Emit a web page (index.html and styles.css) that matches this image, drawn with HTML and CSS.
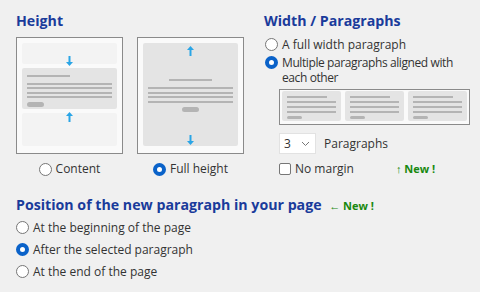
FILE: index.html
```html
<!DOCTYPE html>
<html lang="en">

<head>
    <meta charset="UTF-8">
    <title>Paragraph options</title>
    <link rel="stylesheet" href="styles.css">
</head>

<body>
    <div class="panel">
        <div class="top-row">
            <div class="height-col">
                <h3>Height</h3>
                <div class="height-options">
                    <label class="height-choice">
                        <div class="thumb">
                            <div class="block light top">
                                <svg class="arrow" width="7" height="10" viewBox="0 0 7 10"><path d="M3.5 10L7 6H4.5V0H2.5V6H0Z"/></svg>
                            </div>
                            <div class="block dark content-block">
                                <span class="line short"></span>
                                <span class="line"></span>
                                <span class="line"></span>
                                <span class="line"></span>
                                <span class="line"></span>
                                <span class="pill"></span>
                            </div>
                            <div class="block light bottom">
                                <svg class="arrow" width="7" height="10" viewBox="0 0 7 10"><path d="M3.5 0L7 4H4.5V10H2.5V4H0Z"/></svg>
                            </div>
                        </div>
                        <span class="radio-row"><span class="radio"></span>Content</span>
                    </label>
                    <label class="height-choice">
                        <div class="thumb">
                            <div class="block dark full">
                                <svg class="arrow" width="7" height="10" viewBox="0 0 7 10"><path d="M3.5 0L7 4H4.5V10H2.5V4H0Z"/></svg>
                                <div class="centered">
                                    <span class="line short"></span>
                                    <span class="line"></span>
                                    <span class="line"></span>
                                    <span class="line"></span>
                                    <span class="line"></span>
                                    <span class="pill"></span>
                                </div>
                                <svg class="arrow" width="7" height="10" viewBox="0 0 7 10"><path d="M3.5 10L7 6H4.5V0H2.5V6H0Z"/></svg>
                            </div>
                        </div>
                        <span class="radio-row"><span class="radio checked"></span>Full height</span>
                    </label>
                </div>
            </div>

            <div class="width-col">
                <h3>Width / Paragraphs</h3>
                <label class="option first"><span class="radio"></span>A full width paragraph</label>
                <label class="option multi"><span class="radio checked"></span><span>Multiple paragraphs aligned with each other</span></label>
                <div class="columns-thumb">
                    <div class="col-block">
                        <span class="line short"></span>
                        <span class="line"></span>
                        <span class="line"></span>
                        <span class="line"></span>
                        <span class="pill"></span>
                    </div>
                    <div class="col-block">
                        <span class="line short"></span>
                        <span class="line"></span>
                        <span class="line"></span>
                        <span class="line"></span>
                        <span class="pill"></span>
                    </div>
                    <div class="col-block">
                        <span class="line short"></span>
                        <span class="line"></span>
                        <span class="line"></span>
                        <span class="line"></span>
                        <span class="pill"></span>
                    </div>
                </div>
                <div class="count-row">
                    <div class="select">3
                        <svg width="9" height="6" viewBox="0 0 9 6"><path d="M1 1l3.5 3.5L8 1" fill="none" stroke="#777" stroke-width="1"/></svg>
                    </div>
                    <span>Paragraphs</span>
                </div>
                <div class="margin-row">
                    <label class="option"><span class="checkbox"></span>No margin</label>
                    <span class="new">&#8593; New !</span>
                </div>
            </div>
        </div>

        <h3 class="position-title">Position of the new paragraph in your page <span class="new">&#8592; New !</span></h3>
        <label class="option pos"><span class="radio"></span>At the beginning of the page</label>
        <label class="option pos"><span class="radio checked"></span>After the selected paragraph</label>
        <label class="option pos"><span class="radio"></span>At the end of the page</label>
    </div>
</body>

</html>
```

FILE: styles.css
```css
* {
    margin: 0;
    padding: 0;
    box-sizing: border-box;
}

body {
    font-family: 'Open Sans', 'Liberation Sans', sans-serif;
    background: #f0f0f0;
    color: #333;
    font-size: 12px;
}

.panel {
    padding: 11px 8px 0 16px;
}

h3 {
    font-size: 14.2px;
    font-weight: bold;
    color: #1a3b9b;
    line-height: 20px;
}

.top-row {
    display: flex;
}

.height-col {
    width: 248px;
}

.height-options {
    display: flex;
    gap: 14px;
    margin-top: 6px;
}

.height-choice {
    display: flex;
    flex-direction: column;
    align-items: center;
    width: 107px;
}

.thumb {
    width: 107px;
    height: 117px;
    border: 1px solid #8a8a8a;
    background: #fafafa;
    padding: 5px 5px 7px;
    display: flex;
    flex-direction: column;
    gap: 4px;
}

.block {
    border-radius: 2px;
    display: flex;
    flex-direction: column;
    align-items: center;
}

.light {
    background: #f3f3f3;
}

.light.top {
    height: 21px;
    justify-content: flex-end;
}

.light.top .arrow {
    margin-bottom: -2px;
}

.light.bottom {
    flex: 1;
}

.light.bottom .arrow {
    margin-top: -1px;
}

.dark {
    background: #e4e4e4;
}

.content-block {
    height: 41px;
    padding: 7px 5px 0;
    align-items: flex-start;
    gap: 2.4px;
}

.full {
    flex: 1;
    justify-content: space-between;
    padding: 3px 5px 1px;
}

.centered {
    display: flex;
    flex-direction: column;
    align-items: center;
    gap: 2.6px;
    width: 100%;
}

.line {
    display: block;
    height: 2px;
    width: 100%;
    background: #b4b4b4;
    flex-shrink: 0;
}

.line.short {
    width: 43px;
    margin-bottom: 3.5px;
}

.pill {
    display: block;
    width: 17px;
    height: 5px;
    border-radius: 3px;
    background: #b4b4b4;
    margin-top: 1.5px;
    flex-shrink: 0;
}

.arrow {
    fill: #2aa5e6;
    flex-shrink: 0;
}

.radio-row {
    display: flex;
    align-items: center;
    gap: 4px;
    margin-top: 8px;
    line-height: 14px;
}

.radio {
    width: 13px;
    height: 13px;
    border: 1px solid #767676;
    border-radius: 50%;
    background: #fff;
    flex-shrink: 0;
}

.radio.checked {
    border: 4px solid #0a62c9;
}

.checkbox {
    width: 12px;
    height: 12px;
    border: 1px solid #767676;
    border-radius: 2px;
    background: #fff;
    flex-shrink: 0;
}

.width-col {
    flex: 1;
}

.option {
    display: flex;
    align-items: center;
    gap: 4px;
    line-height: 15px;
}

.width-col .option {
    margin-left: 1px;
}

.option.first {
    margin-top: 6px;
}

.option.multi {
    align-items: flex-start;
    margin-top: 3px;
    letter-spacing: -0.4px;
}

.option.multi .radio {
    margin-top: 1px;
}

.columns-thumb {
    margin: 4px 2px 0 15px;
    height: 36px;
    border: 1px solid #8a8a8a;
    background: #fafafa;
    padding: 1px 2px 3px;
    display: flex;
    gap: 4px;
}

.col-block {
    flex: 1;
    background: #e4e4e4;
    border-radius: 2px;
    padding: 5px 5px 0;
    display: flex;
    flex-direction: column;
    gap: 3px;
}

.col-block .line.short {
    width: 40px;
    margin-bottom: 0;
}

.col-block .pill {
    width: 15px;
    height: 3px;
    margin-top: 0;
}

.count-row {
    display: flex;
    align-items: center;
    gap: 8px;
    margin: 8px 0 0 15px;
}

.select {
    width: 37px;
    height: 21px;
    background: #fff;
    border: 1px solid #e2e2e2;
    display: flex;
    align-items: center;
    justify-content: space-between;
    padding: 0 5px 0 4px;
}

.margin-row {
    display: flex;
    align-items: center;
    margin-left: 14px;
    margin-top: 7px;
}

.margin-row .option {
    width: 117px;
}

.new {
    color: #18880f;
    font-size: 11px;
    font-weight: bold;
}

.position-title {
    margin-top: 19px;
}

.position-title .new {
    margin-left: 4px;
}

.option.pos {
    height: 22px;
}
```
